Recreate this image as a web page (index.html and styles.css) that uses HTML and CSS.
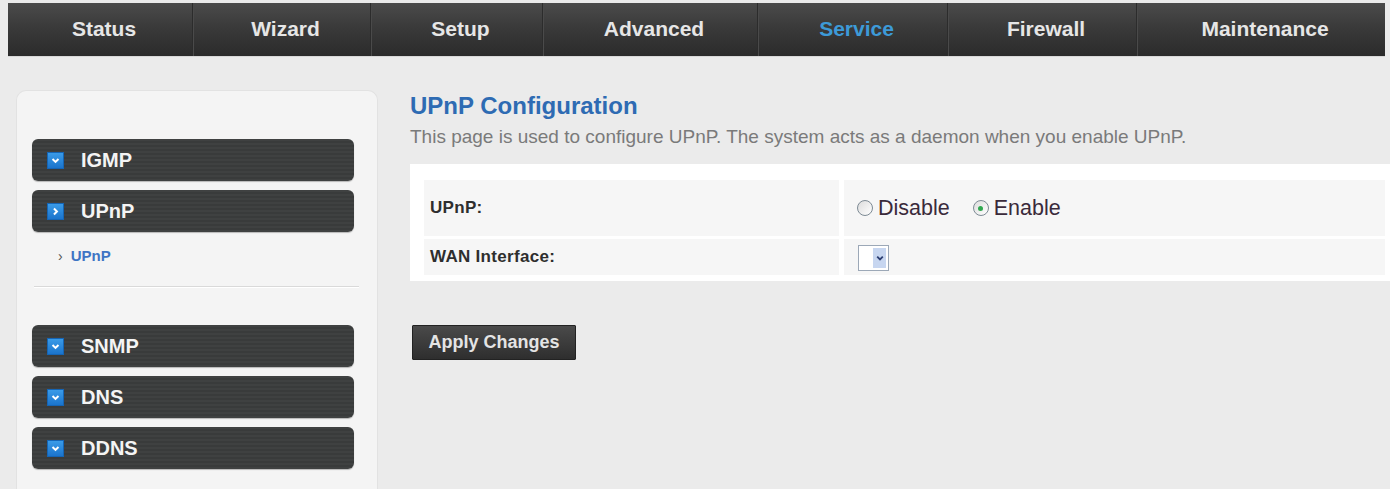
FILE: index.html
```html
<html lang="en">
    <head>
        <meta charset="utf-8"/>
        <title>UPnP Configuration</title>
        <link rel="stylesheet" href="styles.css">
    </head>

    <body>
        <div class="topnav">
            <a class="nav-item w1">Status</a>
            <a class="nav-item w2">Wizard</a>
            <a class="nav-item w3">Setup</a>
            <a class="nav-item w4">Advanced</a>
            <a class="nav-item w5 active">Service</a>
            <a class="nav-item w6">Firewall</a>
            <a class="nav-item w7 last">Maintenance</a>
        </div>

        <div class="page">
            <div class="sidebar">
                <div class="menu-bar">
                    <span class="menu-icon"><svg viewBox="0 0 10 10" width="11" height="11"><path d="M2.3 3.6 L5 6.3 L7.7 3.6" fill="none" stroke="#fff" stroke-width="1.8"/></svg></span>
                    IGMP
                </div>
                <div class="menu-bar">
                    <span class="menu-icon"><svg viewBox="0 0 10 10" width="11" height="11"><path d="M3.6 2.3 L6.3 5 L3.6 7.7" fill="none" stroke="#fff" stroke-width="1.8"/></svg></span>
                    UPnP
                </div>
                <div class="sub-item"><span class="sub-arrow">&rsaquo;</span><a class="sub-link">UPnP</a></div>
                <div class="menu-sep"></div>
                <div class="menu-bar">
                    <span class="menu-icon"><svg viewBox="0 0 10 10" width="11" height="11"><path d="M2.3 3.6 L5 6.3 L7.7 3.6" fill="none" stroke="#fff" stroke-width="1.8"/></svg></span>
                    SNMP
                </div>
                <div class="menu-bar">
                    <span class="menu-icon"><svg viewBox="0 0 10 10" width="11" height="11"><path d="M2.3 3.6 L5 6.3 L7.7 3.6" fill="none" stroke="#fff" stroke-width="1.8"/></svg></span>
                    DNS
                </div>
                <div class="menu-bar">
                    <span class="menu-icon"><svg viewBox="0 0 10 10" width="11" height="11"><path d="M2.3 3.6 L5 6.3 L7.7 3.6" fill="none" stroke="#fff" stroke-width="1.8"/></svg></span>
                    DDNS
                </div>
            </div>

            <div class="content">
                <h2 class="title">UPnP Configuration</h2>
                <p class="desc">This page is used to configure UPnP. The system acts as a daemon when you enable UPnP.</p>

                <div class="panel">
                    <table class="form-table" cellspacing="0">
                        <tr class="row1">
                            <td class="label">UPnP:</td>
                            <td class="value">
                                <div class="value-wrap">
                                    <label class="radio-opt"><span class="radio"></span>Disable</label>
                                    <label class="radio-opt"><span class="radio checked"></span>Enable</label>
                                </div>
                            </td>
                        </tr>
                        <tr class="row2">
                            <td class="label">WAN Interface:</td>
                            <td class="value">
                                <div class="value-wrap">
                                    <span class="select-box">
                                        <span class="select-btn"><svg viewBox="0 0 10 10" width="10" height="10"><path d="M2.2 3.6 L5 6.4 L7.8 3.6" fill="none" stroke="#2d3f73" stroke-width="1.8"/></svg></span>
                                    </span>
                                </div>
                            </td>
                        </tr>
                    </table>
                </div>

                <button class="apply-btn">Apply Changes</button>
            </div>
        </div>
    </body>
</html>
```

FILE: styles.css
```css
body {
    margin: 0; background: #ebebeb; overflow: hidden;
    font-family: "Liberation Sans", Arial, sans-serif;
}

/* top navigation */
.topnav {
    display: flex; height: 53px; margin: 3px 5px 0 8px;
    background: linear-gradient(to bottom, #4b4b4b 0%, #3a3a3a 45%, #2b2b2b 100%);
    border-bottom: 1px solid #d8d8d8;
}
.nav-item {
    display: flex; align-items: center; justify-content: center;
    color: #e6e6e6; font-size: 21px; font-weight: bold;
    border-right: 1px solid #2c2c2c; box-shadow: 1px 0 0 #4a4a4a;
    padding: 0 0 2px 8px;
}
.nav-item.last { border-right: none; box-shadow: none; }
.nav-item.active { color: #3d9ad8; }
.w1 { width: 176px; }
.w2 { width: 169px; }
.w3 { width: 163px; }
.w4 { width: 206px; }
.w5 { width: 181px; }
.w6 { width: 180px; }
.w7 { flex: 1; }

.page { display: flex; padding-top: 33px; }

/* left menu */
.sidebar {
    width: 322px; min-height: 350px; margin-left: 16px;
    padding: 48px 23px 0 15px;
    background: #f4f4f4; border: 1px solid #e2e2e2; border-bottom: none;
    border-radius: 10px 10px 0 0;
}
.menu-bar {
    display: flex; align-items: center; height: 42px; margin-bottom: 9px;
    border-radius: 6px; color: #f4f4f4; font-size: 20px; font-weight: bold;
    background: repeating-linear-gradient(to bottom, #3f4141 0, #3f4141 2px, #393b3b 2px, #393b3b 4px);
    box-shadow: 0 1px 1px rgba(0,0,0,0.25);
}
.menu-icon {
    display: inline-flex; align-items: center; justify-content: center;
    width: 15px; height: 15px; margin: 0 17px 0 15px;
    background: linear-gradient(to bottom, #3a9be8, #1b74cc);
    border: 1px solid #1565b5;
}
.sub-item {
    height: 36px; margin-top: -3px; padding-left: 26px;
    font-size: 15px; font-weight: bold; line-height: 36px;
}
.sub-arrow { color: #555; font-size: 14px; font-weight: normal; margin-right: 8px; }
.sub-link { color: #3e74c4; }
.menu-sep {
    height: 1px; margin: 12px -5px 38px 2px; background: #d9d9d9;
    box-shadow: 0 1px 0 #fff;
}

/* main content */
.content { flex: 1; margin-left: 32px; padding-top: 1px; }
.title {
    margin: 0; color: #2e6bb3; font-size: 24px; line-height: 30px;
}
.desc {
    margin: 5px 0 0 0; color: #7a7a7a; font-size: 19px; line-height: 22px;
}
.panel {
    margin-top: 16px; padding: 13px 5px 3px 14px; background: #fff;
}
.form-table { width: 100%; border-collapse: separate; border-spacing: 0 3px; }
.form-table td { background: #f6f6f6; }
.label {
    width: 408px; padding-left: 6px; color: #2e2e2e;
    font-size: 17px; font-weight: bold; letter-spacing: 0.3px;
    border-right: 5px solid #fff;
}
.value { padding-left: 13px; }
.value-wrap { display: flex; align-items: center; }
.row1 td { height: 56px; }
.row2 td { height: 36px; }
.radio-opt {
    display: flex; align-items: center; margin-right: 23px;
    color: #3a2a3a; font-size: 21.5px;
}
.radio {
    width: 14px; height: 14px; margin-right: 5px; border-radius: 50%;
    border: 1px solid #7d8a94; background: linear-gradient(135deg, #dcdcdc, #fff);
    display: flex; align-items: center; justify-content: center;
}
.radio.checked::after {
    content: ""; width: 5px; height: 5px; border-radius: 50%; background: #2fa84f;
}
.select-box {
    display: flex; justify-content: flex-end; align-items: center;
    width: 27px; height: 24px; margin: 2px 0 0 1px; padding-right: 2px;
    background: #fff; border: 1px solid #9ca8b7;
}
.select-btn {
    display: flex; align-items: center; justify-content: center;
    width: 13px; height: 20px; background: #c7d6f0;
}

.apply-btn {
    margin: 44px 0 0 2px; width: 164px; height: 35px;
    font-family: "Liberation Sans", Arial, sans-serif;
    font-size: 18px; font-weight: bold; color: #e4e4e4;
    background: linear-gradient(to bottom, #4a4a4a, #2e2e2e);
    border: 1px solid #222; border-radius: 1px;
}
```
